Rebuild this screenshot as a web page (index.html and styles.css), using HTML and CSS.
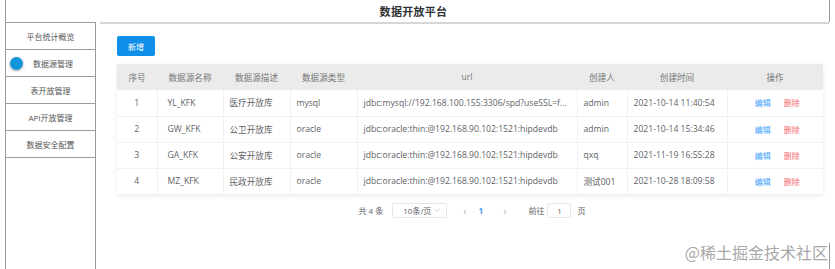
FILE: index.html
```html
<!DOCTYPE html>
<html lang="zh-CN">
<head>
    <meta charset="UTF-8">
    <meta name="viewport" content="width=device-width, initial-scale=1.0">
    <title>数据开放平台</title>
    <link rel="stylesheet" href="styles.css">
</head>
<body>
    <div class="page">
        <div class="header">
            <h1>数据开放平台</h1>
        </div>
        <div class="container">
            <div class="menu">
                <div class="menu-item">平台统计概览</div>
                <div class="menu-item active"><span class="dot"></span>数据源管理</div>
                <div class="menu-item">表开放管理</div>
                <div class="menu-item">API开放管理</div>
                <div class="menu-item">数据安全配置</div>
            </div>
            <div class="main">
                <button class="btn-add">新增</button>
                <table class="grid">
                    <colgroup>
                        <col style="width:40px">
                        <col style="width:66px">
                        <col style="width:67px">
                        <col style="width:67px">
                        <col style="width:220px">
                        <col style="width:50px">
                        <col style="width:100px">
                        <col style="width:96px">
                    </colgroup>
                    <thead>
                        <tr>
                            <th>序号</th>
                            <th>数据源名称</th>
                            <th>数据源描述</th>
                            <th>数据源类型</th>
                            <th>url</th>
                            <th>创建人</th>
                            <th>创建时间</th>
                            <th>操作</th>
                        </tr>
                    </thead>
                    <tbody>
                        <tr>
                            <td class="num">1</td>
                            <td class="name">YL_KFK</td>
                            <td>医疗开放库</td>
                            <td>mysql</td>
                            <td>jdbc:mysql://192.168.100.155:3306/spd?useSSL=f...</td>
                            <td>admin</td>
                            <td>2021-10-14 11:40:54</td>
                            <td class="ops"><a class="edit">编辑</a><a class="del">删除</a></td>
                        </tr>
                        <tr>
                            <td class="num">2</td>
                            <td class="name">GW_KFK</td>
                            <td>公卫开放库</td>
                            <td>oracle</td>
                            <td>jdbc:oracle:thin:@192.168.90.102:1521:hipdevdb</td>
                            <td>admin</td>
                            <td>2021-10-14 15:34:46</td>
                            <td class="ops"><a class="edit">编辑</a><a class="del">删除</a></td>
                        </tr>
                        <tr>
                            <td class="num">3</td>
                            <td class="name">GA_KFK</td>
                            <td>公安开放库</td>
                            <td>oracle</td>
                            <td>jdbc:oracle:thin:@192.168.90.102:1521:hipdevdb</td>
                            <td>qxq</td>
                            <td>2021-11-19 16:55:28</td>
                            <td class="ops"><a class="edit">编辑</a><a class="del">删除</a></td>
                        </tr>
                        <tr>
                            <td class="num">4</td>
                            <td class="name">MZ_KFK</td>
                            <td>民政开放库</td>
                            <td>oracle</td>
                            <td>jdbc:oracle:thin:@192.168.90.102:1521:hipdevdb</td>
                            <td>测试001</td>
                            <td>2021-10-28 18:09:58</td>
                            <td class="ops"><a class="edit">编辑</a><a class="del">删除</a></td>
                        </tr>
                    </tbody>
                </table>
                <div class="pager">
                    <span>共 4 条</span>
                    <span class="size">10条/页<svg width="8" height="8" viewBox="0 0 8 8"><path d="M1.5 3l2.5 2.5L6.5 3" fill="none" stroke="#c0c4cc" stroke-width="0.8"/></svg></span>
                    <span class="arrow">&lsaquo;</span>
                    <span class="cur">1</span>
                    <span class="arrow">&rsaquo;</span>
                    <span>前往</span>
                    <span class="jump">1</span>
                    <span>页</span>
                </div>
            </div>
        </div>
        <div class="mark">@稀土掘金技术社区</div>
    </div>
</body>
</html>
```

FILE: styles.css
```css
*{
    margin: 0px;
    padding: 0px;
    box-sizing: border-box;
}
body{
    font-family: "Open Sans", "Noto Sans CJK SC", sans-serif;
    color: #606266;
    background: #fff;
}
.page{
    position: relative;
    margin-left: 5px;
    width: 825px;
    height: 269px;
    border-left: 1px solid #9a9a9a;
    display: flex;
    flex-direction: column;
    overflow: hidden;
}
.header{
    height: 22px;
    border-right: 1px solid #9a9a9a;
    display: flex;
    align-items: center;
    justify-content: center;
    padding-right: 8px;
}
.header h1{
    font-size: 11px;
    font-weight: bold;
    color: #303133;
    letter-spacing: 0.3px;
}
.container{
    flex: 1;
    display: flex;
    flex-direction: row;
}
.menu{
    width: 91px;
    border-top: 1px solid #9a9a9a;
    border-right: 1px solid #9a9a9a;
}
.menu-item{
    height: 27px;
    border-bottom: 1px solid #9a9a9a;
    display: flex;
    align-items: center;
    justify-content: center;
    font-size: 8px;
    color: #555;
}
.menu-item.active{
    justify-content: flex-start;
    padding-left: 4px;
    gap: 10px;
}
.dot{
    width: 13px;
    height: 13px;
    border-radius: 50%;
    background: #1296db;
    box-shadow: 0 1px 3px rgba(0, 0, 0, 0.35);
}
.main{
    flex: 1;
    margin-left: 4px;
    margin-right: 1px;
    border-top: 2px solid #d6d6d6;
    padding: 12px 6px 0px 17px;
    display: flex;
    flex-direction: column;
    align-items: flex-start;
}
.btn-add{
    width: 38px;
    height: 20px;
    border: none;
    border-radius: 2px;
    background: #0f8fea;
    color: #fff;
    font-family: inherit;
    font-size: 8px;
    margin-bottom: 8px;
}
.grid{
    width: 706px;
    table-layout: fixed;
    border-collapse: collapse;
    box-shadow: 0 1px 4px rgba(0, 0, 0, 0.08);
    font-size: 8.6px;
}
.grid th{
    height: 26px;
    background: #ebebeb;
    font-weight: normal;
    color: #777;
    text-align: center;
}
.grid td{
    height: 26px;
    padding: 0px 6px;
    border-right: 1px solid #f1f1f1;
    border-bottom: 1px solid #f1f1f1;
    white-space: nowrap;
    overflow: hidden;
}
.grid td:last-child{
    border-right: none;
}
.grid td.num{
    text-align: center;
}
.grid td.name{
    padding-left: 10px;
}
.grid td.ops{
    text-align: center;
    font-size: 8px;
    padding-left: 10px;
}
.edit{
    color: #409eff;
    margin-right: 13px;
}
.del{
    color: #f56c6c;
}
.pager{
    align-self: center;
    margin-top: 8px;
    margin-left: 4px;
    display: flex;
    align-items: center;
    font-size: 8px;
    color: #606266;
}
.size{
    width: 55px;
    height: 15px;
    margin-left: 9px;
    border: 1px solid #e4e7ed;
    border-radius: 2px;
    display: flex;
    align-items: center;
    justify-content: space-between;
    padding: 0px 5px 0px 10px;
}
.arrow{
    margin: 0px 8px 0px 16px;
    color: #b0b3b8;
    font-size: 11px;
}
.cur{
    color: #409eff;
    font-weight: bold;
    margin-left: 4px;
    margin-right: 4px;
}
.pager .arrow + span:not(.cur){
    margin-left: 14px;
}
.jump{
    width: 24px;
    height: 15px;
    margin: 0px 6px 0px 3px;
    border: 1px solid #e4e7ed;
    border-radius: 2px;
    display: flex;
    align-items: center;
    justify-content: center;
}
.mark{
    position: absolute;
    right: 0px;
    bottom: 0px;
    height: 26px;
    padding-right: 1px;
    border-right: 1px solid #9a9a9a;
    font-family: "Noto Sans CJK SC", sans-serif;
    font-size: 16px;
    line-height: 18px;
    color: #a8a8a8;
}
```
